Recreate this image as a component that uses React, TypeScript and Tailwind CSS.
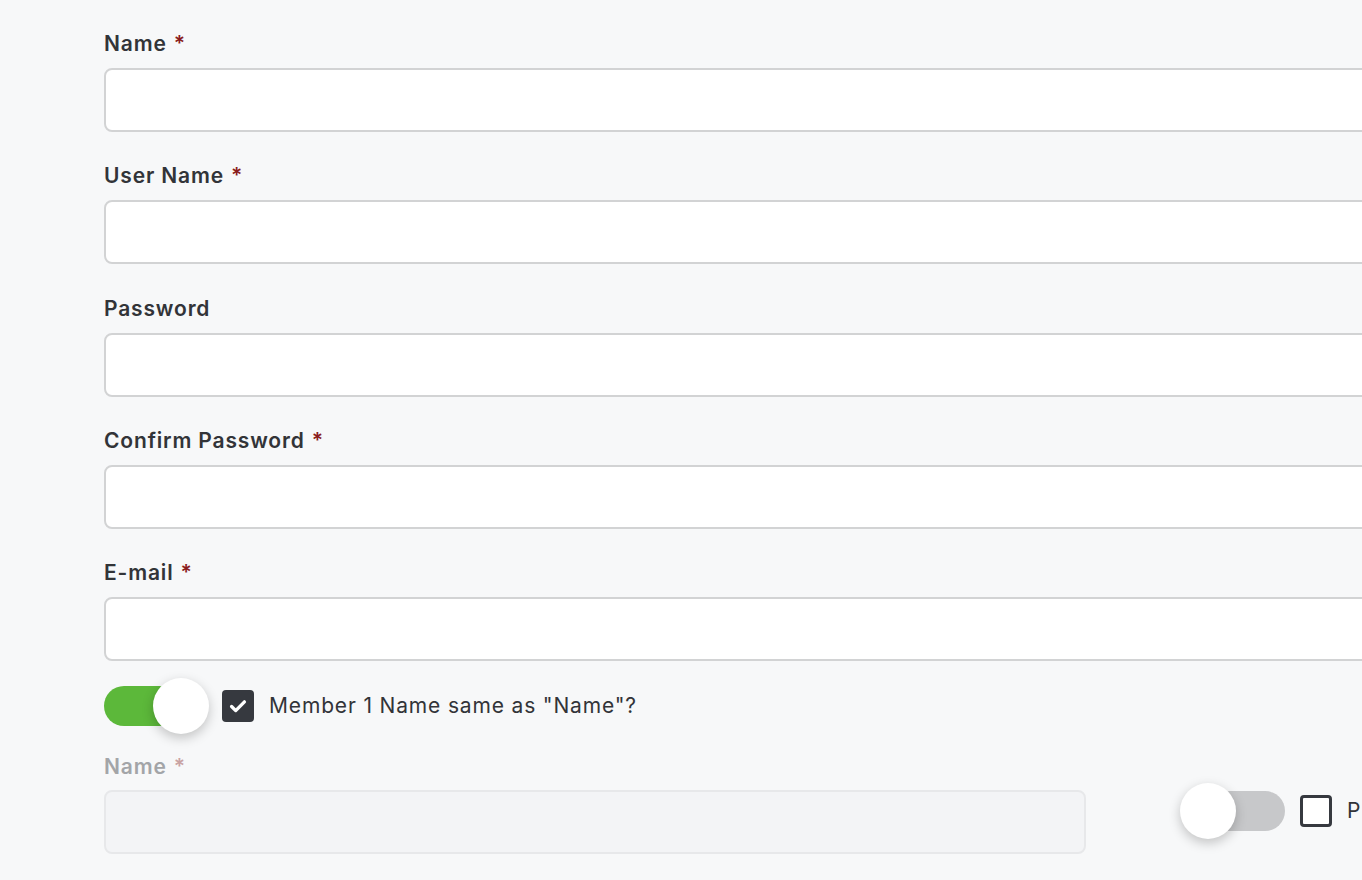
import React from 'react';

const fields = [
  { label: 'Name', required: true },
  { label: 'User Name', required: true },
  { label: 'Password', required: false },
  { label: 'Confirm Password', required: true },
  { label: 'E-mail', required: true },
];

const Toggle: React.FC<{ on: boolean }> = ({ on }) => (
  <div className="relative w-[105px] h-[56px] flex items-center shrink-0">
    <div
      className={
        on
          ? 'ml-0 w-[97px] h-[40px] rounded-full bg-[#5cb83a]'
          : 'ml-[8px] w-[97px] h-[40px] rounded-full bg-[#c7c8ca]'
      }
    />
    <div
      className={
        on
          ? 'absolute left-[49px] top-0 w-[56px] h-[56px] rounded-full bg-white shadow-[0_4px_12px_rgba(0,0,0,0.22)]'
          : 'absolute left-0 top-0 w-[56px] h-[56px] rounded-full bg-white shadow-[0_4px_12px_rgba(0,0,0,0.22)]'
      }
    />
  </div>
);

export default function App() {
  return (
    <div
      className="w-[1362px] h-[880px] overflow-hidden bg-[#f7f8f9] text-[#323438]"
      style={{ fontFamily: 'Inter, "Noto Sans", sans-serif' }}
    >
      <div className="pl-[104px] pt-[32px] w-[1600px]">
        {fields.map((f) => (
          <div key={f.label} className="mb-[32.33px]">
            <label className="block h-[24px] leading-[24px] text-[21px] tracking-[0.04em] font-semibold mb-[12px]">
              {f.label}
              {f.required && <span className="ml-[7px] text-[#8a1c1c]">*</span>}
            </label>
            <input
              type="text"
              className="block w-[1400px] h-[64px] rounded-[8px] border-2 border-[#d2d3d4] bg-white outline-none"
            />
          </div>
        ))}

        {/* Member toggle row */}
        <div className="flex items-center -mt-[16px] h-[56px]">
          <Toggle on />
          <div className="ml-[13px] w-[32px] h-[32px] rounded-[4px] bg-[#36393f] flex items-center justify-center">
            <svg width="22" height="22" viewBox="0 0 24 24" fill="none" stroke="white" strokeWidth="3.6" strokeLinecap="round" strokeLinejoin="round">
              <path d="M5 12.5l4.5 4.5L19 7.5" />
            </svg>
          </div>
          <span className="ml-[15px] text-[21px] tracking-[0.04em] leading-[24px]">Member 1 Name same as "Name"?</span>
        </div>

        <div className="flex mt-[21px]">
          <div className="w-[982px]">
            <label className="block h-[24px] leading-[24px] text-[21px] tracking-[0.04em] font-semibold mb-[11px] text-[#a3a5a8]">
              Name<span className="ml-[7px] text-[#c9a3a3]">*</span>
            </label>
            <input
              type="text"
              disabled
              className="block w-[982px] h-[64px] rounded-[8px] border-2 border-[#e7e8ea] bg-[#f3f4f6] outline-none"
            />
          </div>
          <div className="ml-[94px] mt-[34px] flex items-start">
            <div className="-mt-[6px]">
              <Toggle on={false} />
            </div>
            <div className="ml-[15px] mt-[6px] w-[32px] h-[32px] rounded-[4px] border-[3px] border-[#36393f] bg-white" />
            <span className="ml-[15px] mt-[10px] text-[21px] tracking-[0.04em] leading-[24px]">Primary</span>
          </div>
        </div>
      </div>
    </div>
  );
}
